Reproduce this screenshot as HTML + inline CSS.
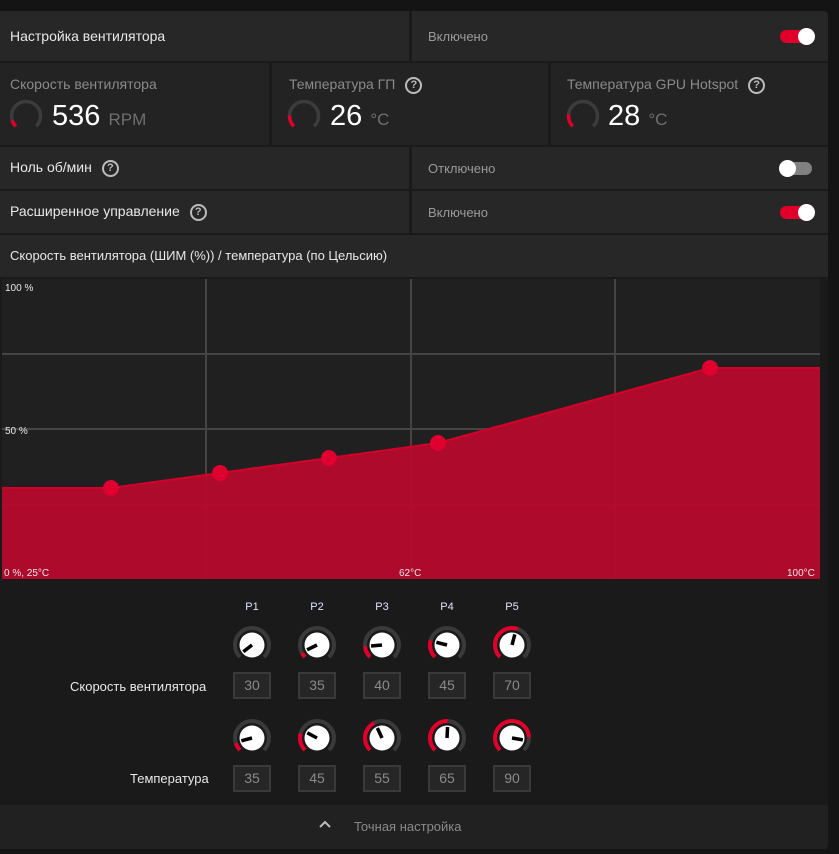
<!DOCTYPE html>
<html><head><meta charset="utf-8"><style>
*{margin:0;padding:0;box-sizing:border-box}
body{width:839px;height:854px;background:#141414;font-family:"Liberation Sans","DejaVu Sans",sans-serif;position:relative;overflow:hidden;color:#e6e6e6}
.a{position:absolute}
.cell{position:absolute;background:#272727}
.lbl{position:absolute;font-size:14px;color:#e8e8e8;white-space:nowrap}
.val{position:absolute;font-size:13px;color:#9a9a9a}
.q{display:inline-block;width:17px;height:17px;border:2px solid #bbb;border-radius:50%;font-size:11px;font-weight:bold;text-align:center;line-height:13px;color:#bbb;vertical-align:middle;margin-left:10px}
.tg{position:absolute;width:32px;height:13px;border-radius:7px}
.tg i{position:absolute;top:-2.5px;width:17px;height:17px;border-radius:50%;background:#fff}
.box{position:absolute;width:38px;height:27px;border:2px solid #3a3a3a;background:#262626;color:#8a8a8a;font-size:14px;text-align:center;line-height:23px}
</style></head><body>
<div class="a" style="left:0;top:11px;width:828px;height:838px;background:#1a1a1a;border-radius:0 4px 4px 0"></div>

<!-- row1 -->
<div class="cell" style="left:0;top:11px;width:409px;height:50px"></div>
<div class="cell" style="left:412px;top:11px;width:416px;height:50px;border-radius:0 4px 0 0"></div>
<div class="lbl" style="left:10px;top:28px">Настройка вентилятора</div>
<div class="val" style="left:428px;top:29px">Включено</div>
<div class="tg" style="left:780px;top:30px;background:#e0002a"><i style="right:-3px"></i></div>

<!-- row2 -->
<div class="cell" style="left:0;top:63px;width:269px;height:82px;background:#232323"></div>
<div class="cell" style="left:272px;top:63px;width:276px;height:82px;background:#232323"></div>
<div class="cell" style="left:551px;top:63px;width:277px;height:82px;background:#232323"></div>
<div class="val" style="left:10px;top:76px;font-size:14px;color:#8a8a8a">Скорость вентилятора</div>
<div class="val" style="left:289px;top:76px;font-size:14px;color:#8a8a8a">Температура ГП<span class="q">?</span></div>
<div class="val" style="left:567px;top:76px;font-size:14px;color:#8a8a8a">Температура GPU Hotspot<span class="q">?</span></div>
<svg class="a" style="left:0;top:90px" width="839" height="50">
<g fill="none" stroke-width="3.5">
<g transform="translate(26,26)"><circle r="14.5" stroke="#3c3c3c" stroke-dasharray="68.3 200" transform="rotate(135)"/><circle r="14.5" stroke="#e0002a" stroke-dasharray="7 200" transform="rotate(135)"/></g>
<g transform="translate(304,26)"><circle r="14.5" stroke="#3c3c3c" stroke-dasharray="68.3 200" transform="rotate(135)"/><circle r="14.5" stroke="#e0002a" stroke-dasharray="12 200" transform="rotate(135)"/></g>
<g transform="translate(583,26)"><circle r="14.5" stroke="#3c3c3c" stroke-dasharray="68.3 200" transform="rotate(135)"/><circle r="14.5" stroke="#e0002a" stroke-dasharray="13 200" transform="rotate(135)"/></g>
</g></svg>
<div class="a" style="left:52px;top:100px;font-size:29px;color:#fff">536 <span style="font-size:17px;color:#6f6f6f">RPM</span></div>
<div class="a" style="left:330px;top:100px;font-size:29px;color:#fff">26 <span style="font-size:17px;color:#6f6f6f">°C</span></div>
<div class="a" style="left:608px;top:100px;font-size:29px;color:#fff">28 <span style="font-size:17px;color:#6f6f6f">°C</span></div>

<!-- row3 -->
<div class="cell" style="left:0;top:147px;width:409px;height:42px"></div>
<div class="cell" style="left:412px;top:147px;width:416px;height:42px"></div>
<div class="lbl" style="left:10px;top:159px">Ноль об/мин<span class="q">?</span></div>
<div class="val" style="left:428px;top:161px">Отключено</div>
<div class="tg" style="left:780px;top:162px;background:#808080"><i style="left:-1px"></i></div>

<!-- row4 -->
<div class="cell" style="left:0;top:191px;width:409px;height:42px"></div>
<div class="cell" style="left:412px;top:191px;width:416px;height:42px"></div>
<div class="lbl" style="left:10px;top:203px">Расширенное управление<span class="q">?</span></div>
<div class="val" style="left:428px;top:205px">Включено</div>
<div class="tg" style="left:780px;top:206px;background:#e0002a"><i style="right:-3px"></i></div>

<!-- row5 -->
<div class="cell" style="left:0;top:235px;width:828px;height:42px"></div>
<div class="lbl" style="left:10px;top:248px;font-size:13px">Скорость вентилятора (ШИМ (%)) / температура (по Цельсию)</div>

<!-- chart -->
<svg class="a" style="left:0;top:279px" width="828" height="302">
<rect x="2" y="0" width="818" height="300" fill="#202020"/>
<g stroke="#444" stroke-width="2">
<line x1="206" y1="0" x2="206" y2="300"/><line x1="411" y1="0" x2="411" y2="300"/><line x1="615" y1="0" x2="615" y2="300"/>
<line x1="2" y1="75" x2="820" y2="75"/><line x1="2" y1="150" x2="820" y2="150"/><line x1="2" y1="226" x2="820" y2="226"/>
</g>
<polygon points="2,209 111,209 220,194 329,179 438,164 710,89 820,89 820,300 2,300" fill="#ae0a2c"/>
<polyline points="2,209 111,209 220,194 329,179 438,164 710,89 820,89" fill="none" stroke="#d3002a" stroke-width="2"/>
<g stroke="#b8102f" stroke-width="1" opacity=".6"><line x1="206" y1="190" x2="206" y2="300"/><line x1="411" y1="160" x2="411" y2="300"/><line x1="615" y1="110" x2="615" y2="300"/><line x1="2" y1="226" x2="820" y2="226"/></g>
<g fill="#e0002f"><circle cx="111" cy="209" r="8"/><circle cx="220" cy="194" r="8"/><circle cx="329" cy="179" r="8"/><circle cx="438" cy="164" r="8"/><circle cx="710" cy="89" r="8"/></g>
<g font-size="10" fill="#e8e8e8" font-family="Liberation Sans,sans-serif">
<text x="5" y="12">100 %</text><text x="5" y="155">50 %</text>
<text x="4" y="297">0 %, 25°C</text><text x="399" y="297">62°C</text><text x="787" y="297">100°C</text>
</g>
</svg>

<!-- knobs -->
<svg class="a" style="left:0;top:590px" width="600" height="210" font-family="Liberation Sans,sans-serif">
<g font-size="11" fill="#dde4ff" text-anchor="middle"><text x="252" y="20">P1</text><text x="317" y="20">P2</text><text x="382" y="20">P3</text><text x="447" y="20">P4</text><text x="512" y="20">P5</text></g>
<defs>
<g id="k"><circle r="17" fill="none" stroke="#3a3a3a" stroke-width="4" stroke-dasharray="80.1 200" transform="rotate(135)"/><circle r="12.5" fill="#fff"/></g>
</defs>
<g transform="translate(252,55)"><use href="#k"/><line x1="0" y1="0" x2="0" y2="-11" stroke="#000" stroke-width="3.5" transform="rotate(-128)"/></g>
<g transform="translate(317,55)"><use href="#k"/><circle r="17" fill="none" stroke="#e0002a" stroke-width="4" stroke-dasharray="5 200" transform="rotate(135)"/><line x1="0" y1="0" x2="0" y2="-11" stroke="#000" stroke-width="3.5" transform="rotate(-116)"/></g>
<g transform="translate(382,55)"><use href="#k"/><circle r="17" fill="none" stroke="#e0002a" stroke-width="4" stroke-dasharray="12 200" transform="rotate(135)"/><line x1="0" y1="0" x2="0" y2="-11" stroke="#000" stroke-width="3.5" transform="rotate(-95)"/></g>
<g transform="translate(447,55)"><use href="#k"/><circle r="17" fill="none" stroke="#e0002a" stroke-width="4" stroke-dasharray="18 200" transform="rotate(135)"/><line x1="0" y1="0" x2="0" y2="-11" stroke="#000" stroke-width="3.5" transform="rotate(-76)"/></g>
<g transform="translate(512,55)"><use href="#k"/><circle r="17" fill="none" stroke="#e0002a" stroke-width="4" stroke-dasharray="46 200" transform="rotate(135)"/><line x1="0" y1="0" x2="0" y2="-11" stroke="#000" stroke-width="3.5" transform="rotate(15)"/></g>

<g transform="translate(252,148)"><use href="#k"/><circle r="17" fill="none" stroke="#e0002a" stroke-width="4" stroke-dasharray="8 200" transform="rotate(135)"/><line x1="0" y1="0" x2="0" y2="-11" stroke="#000" stroke-width="3.5" transform="rotate(-105)"/></g>
<g transform="translate(317,148)"><use href="#k"/><circle r="17" fill="none" stroke="#e0002a" stroke-width="4" stroke-dasharray="18 200" transform="rotate(135)"/><line x1="0" y1="0" x2="0" y2="-11" stroke="#000" stroke-width="3.5" transform="rotate(-62)"/></g>
<g transform="translate(382,148)"><use href="#k"/><circle r="17" fill="none" stroke="#e0002a" stroke-width="4" stroke-dasharray="32 200" transform="rotate(135)"/><line x1="0" y1="0" x2="0" y2="-11" stroke="#000" stroke-width="3.5" transform="rotate(-25)"/></g>
<g transform="translate(447,148)"><use href="#k"/><circle r="17" fill="none" stroke="#e0002a" stroke-width="4" stroke-dasharray="41 200" transform="rotate(135)"/><line x1="0" y1="0" x2="0" y2="-11" stroke="#000" stroke-width="3.5" transform="rotate(3)"/></g>
<g transform="translate(512,148)"><use href="#k"/><circle r="17" fill="none" stroke="#e0002a" stroke-width="4" stroke-dasharray="66 200" transform="rotate(135)"/><line x1="0" y1="0" x2="0" y2="-11" stroke="#000" stroke-width="3.5" transform="rotate(100)"/></g>
</svg>
<div class="lbl" style="left:70px;top:679px;font-size:13px">Скорость вентилятора</div>
<div class="lbl" style="left:130px;top:771px;font-size:13px">Температура</div>
<div class="box" style="left:233px;top:672px">30</div><div class="box" style="left:298px;top:672px">35</div><div class="box" style="left:363px;top:672px">40</div><div class="box" style="left:428px;top:672px">45</div><div class="box" style="left:493px;top:672px">70</div>
<div class="box" style="left:233px;top:765px">35</div><div class="box" style="left:298px;top:765px">45</div><div class="box" style="left:363px;top:765px">55</div><div class="box" style="left:428px;top:765px">65</div><div class="box" style="left:493px;top:765px">90</div>

<!-- footer -->
<div class="a" style="left:0;top:805px;width:828px;height:44px;background:#212121;border-radius:0 0 4px 0"></div>
<svg class="a" style="left:318px;top:819px" width="14" height="10"><polyline points="2,8 7,3 12,8" fill="none" stroke="#bbb" stroke-width="2"/></svg>
<div class="a" style="left:354px;top:819px;font-size:13px;color:#8a8a8a">Точная настройка</div>
</body></html>
